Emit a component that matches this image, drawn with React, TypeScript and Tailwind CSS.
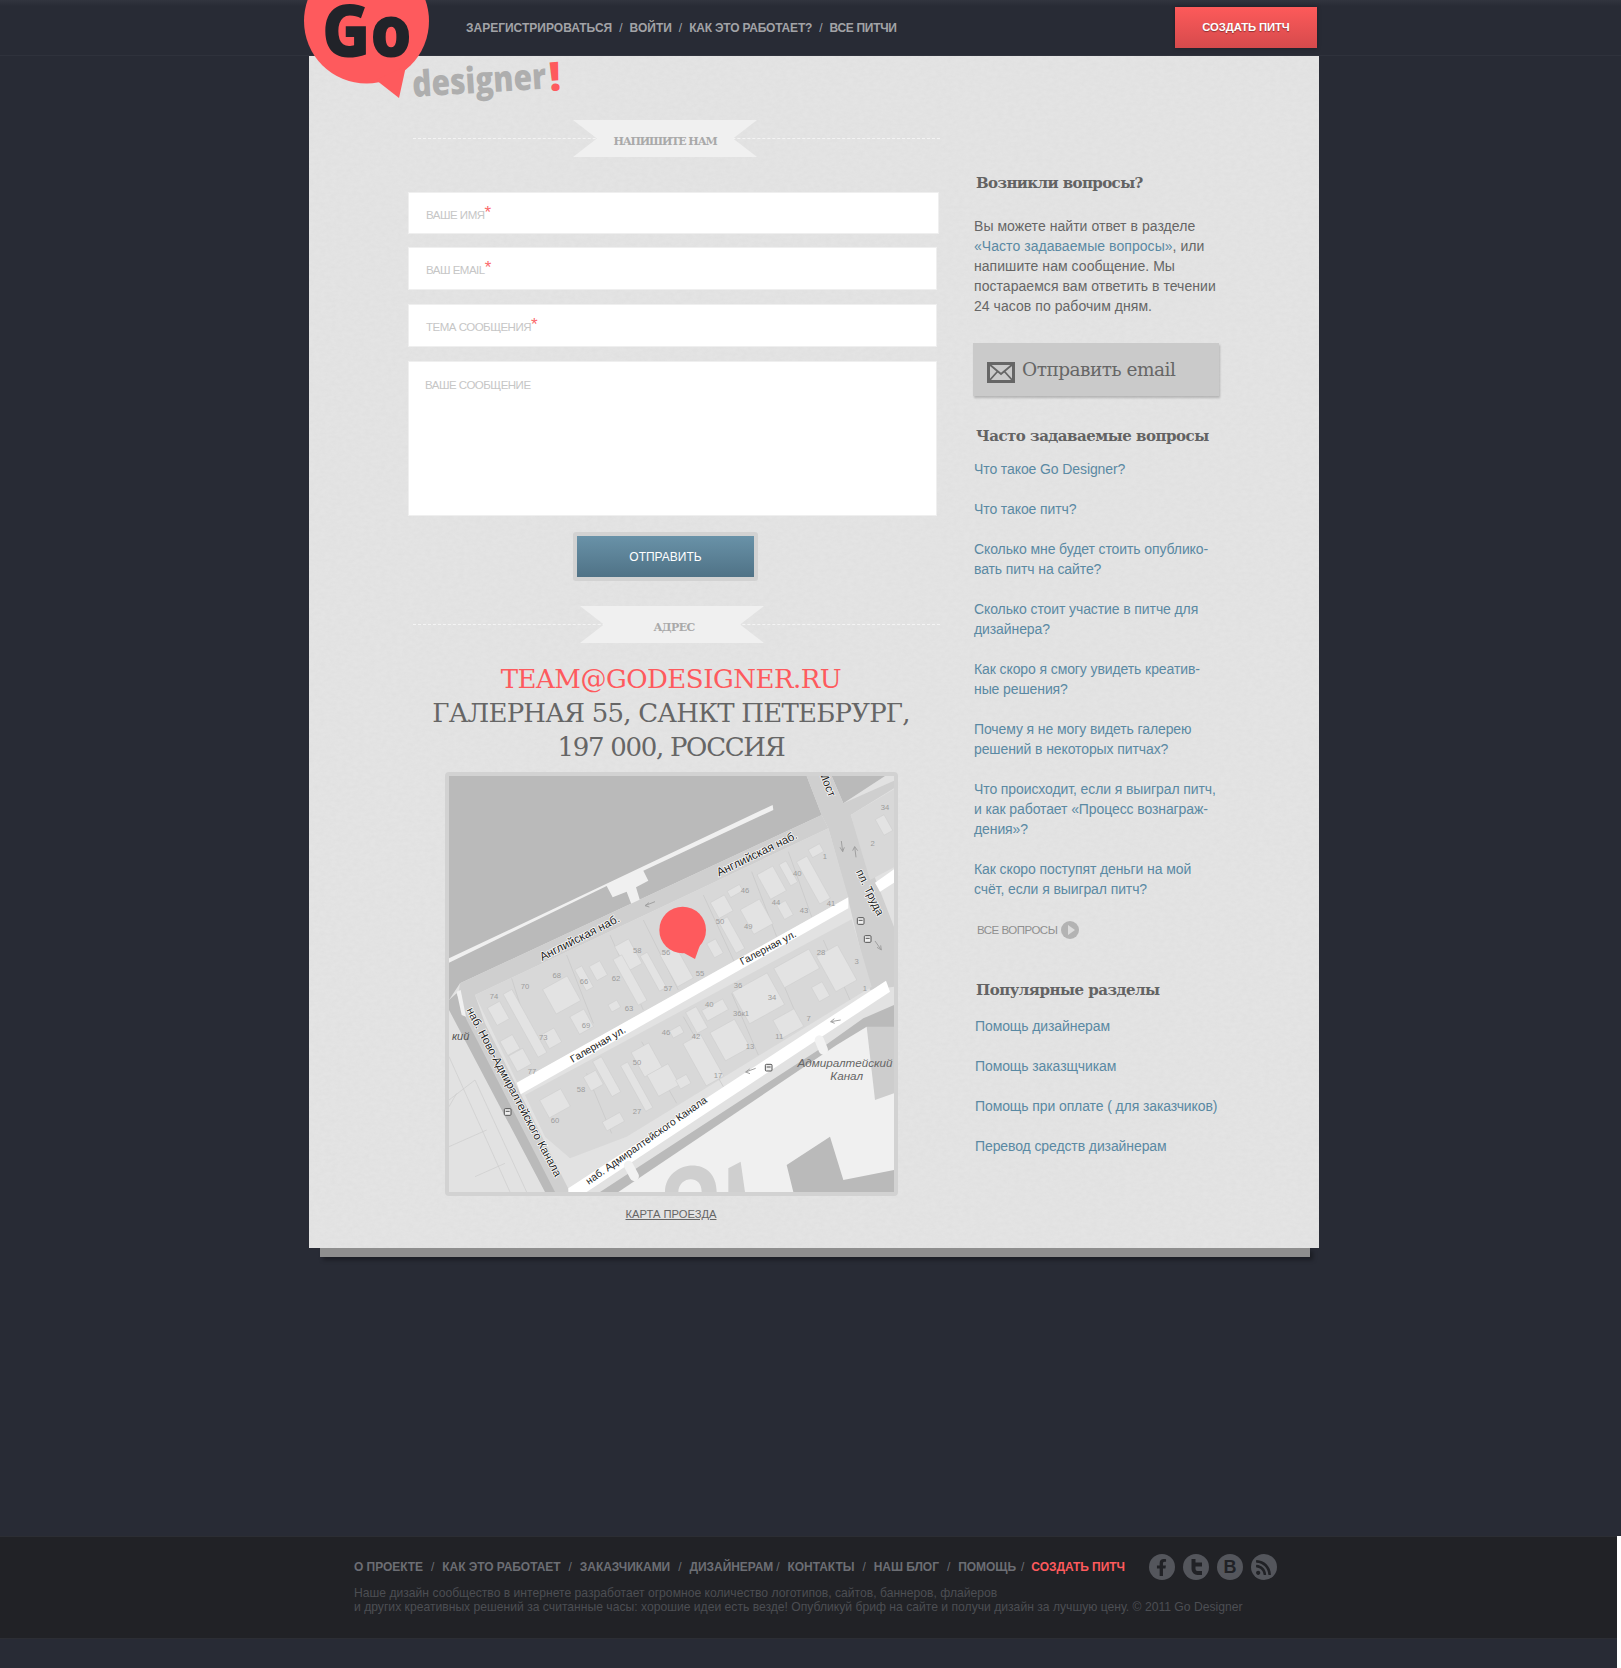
import { FaFacebookF, FaRss } from 'react-icons/fa';

const slab = "[font-family:'DejaVu_Serif',serif]";
const arial = "[font-family:'Liberation_Sans',Arial,sans-serif]";

const faqLinks = [
  ['Что такое Go Designer?'],
  ['Что такое питч?'],
  ['Сколько мне будет стоить опублико-', 'вать питч на сайте?'],
  ['Сколько стоит участие в питче для', 'дизайнера?'],
  ['Как скоро я смогу увидеть креатив-', 'ные решения?'],
  ['Почему я не могу видеть галерею', 'решений в некоторых питчах?'],
  ['Что происходит, если я выиграл питч,', 'и как работает «Процесс вознаграж-', 'дения»?'],
  ['Как скоро поступят деньги на мой', 'счёт, если я выиграл питч?'],
];

const popularLinks = [
  'Помощь дизайнерам',
  'Помощь заказщчикам',
  'Помощь при оплате ( для заказчиков)',
  'Перевод средств дизайнерам',
];

const footerLinks = ['О ПРОЕКТЕ', 'КАК ЭТО РАБОТАЕТ', 'ЗАКАЗЧИКАМИ', 'ДИЗАЙНЕРАМ', 'КОНТАКТЫ', 'НАШ БЛОГ', 'ПОМОЩЬ'];

// map data is in reference-crop units: 3 units = 1px
const buildings: number[][] = [
  [205, 760, 35, 50], [240, 855, 35, 40], [270, 900, 40, 45], [285, 790, 25, 180], [395, 705, 70, 70],
  [462, 655, 20, 60], [505, 632, 30, 40], [595, 585, 40, 70], [455, 785, 40, 50], [365, 835, 35, 40],
  [553, 738, 25, 20], [670, 635, 20, 100], [740, 620, 45, 90], [875, 440, 40, 45], [905, 525, 25, 90],
  [855, 565, 25, 40], [1025, 368, 45, 70], [980, 470, 55, 70], [1150, 360, 30, 120], [1158, 272, 32, 22],
  [915, 393, 35, 18], [1065, 450, 25, 40], [1075, 340, 20, 60], [600, 660, 25, 130],
  [375, 1030, 60, 50], [490, 962, 35, 40], [530, 950, 25, 100], [650, 900, 50, 70], [700, 960, 60, 60],
  [620, 980, 20, 130], [820, 900, 50, 120], [800, 780, 30, 60], [855, 750, 60, 30], [740, 815, 30, 20],
  [760, 965, 30, 25], [900, 840, 70, 80], [985, 715, 100, 90], [1075, 790, 60, 50], [1100, 625, 100, 55],
  [1220, 625, 60, 100], [1172, 695, 30, 40], [550, 1085, 50, 25], [1362, 195, 25, 45],
];

const houseNumbers: [string, number, number][] = [
  ['74', 192, 708], ['70', 285, 680], ['68', 380, 645], ['66', 462, 665], ['62', 558, 654], ['58', 622, 570],
  ['56', 708, 578], ['50', 870, 483], ['46', 945, 390], ['40', 1102, 340], ['44', 1038, 428], ['43', 1122, 450],
  ['41', 1203, 430], ['49', 955, 498], ['1', 1185, 288], ['2', 1328, 250], ['34', 1365, 142], ['55', 810, 640],
  ['57', 714, 684], ['63', 597, 744], ['69', 468, 795], ['73', 340, 833], ['77', 306, 935], ['36', 924, 675],
  ['34', 1026, 713], ['28', 1173, 576], ['3', 1280, 603], ['1', 1305, 686], ['40', 838, 732], ['36к1', 933, 759],
  ['7', 1136, 776], ['46', 708, 816], ['42', 798, 828], ['11', 1048, 828], ['13', 960, 858], ['50', 621, 908],
  ['17', 864, 945], ['58', 453, 987], ['27', 621, 1053], ['60', 375, 1080],
];

const streetLabels: [string, number, number, number, number][] = [
  ['Английская наб.', 450, 535, -27, 35],
  ['Английская наб.', 982, 283, -26, 35],
  ['Галерная ул.', 505, 855, -30, 31],
  ['Галерная ул.', 1015, 565, -28, 31],
  ['наб. Адмиралтейского Канала', 650, 1143, -35, 31],
  ['наб. Ново-Адмиралтейского Канала', 250, 997, 62, 34],
  ['пл. Труда', 1318, 398, 64, 34],
  ['Мост', 1190, 72, 68, 34],
];

const busStops = [[1292, 483], [1313, 537], [1016, 923], [233, 1056]];

function Ribbon({ label, className }: { label: string; className: string }) {
  return (
    <div className="relative h-[37px] w-[532px]">
      <div className="absolute left-[5px] right-0 top-[18px] border-t border-dashed border-[#f4f4f4]" />
      <div
        className={`absolute top-0 h-[37px] w-[184px] bg-[#f0f0f0] [clip-path:polygon(0_0,100%_0,87%_50%,100%_100%,0_100%,13%_50%)] ${slab} pt-[12px] text-center text-[11px] font-bold leading-[20px] text-[#a9a9a9] ${className}`}
      >
        {label}
      </div>
    </div>
  );
}

function Field({ label, className }: { label: string; className: string }) {
  return (
    <div className={`border border-[#efefef] bg-white ${className}`}>
      <span className={`${arial} pl-[17px] text-[11.5px] leading-[44px] tracking-[-0.5px] text-[#c6c6c6]`}>
        {label}
        <span className="relative top-[-1px] text-[17px] leading-none text-[#fb6a6c]">*</span>
      </span>
    </div>
  );
}

function MapView() {
  return (
    <svg viewBox="57 48 1335 1248" className="block h-[416px] w-[445px]">
      <rect x="57" y="48" width="1335" height="1248" fill="#e2e2e2" />
      {/* river and embankment */}
      <polygon points="57,48 1130,48 1175,165 90,670 57,720" fill="#bababa" />
      <polygon points="1205,48 1365,48 1240,130" fill="#bababa" />
      <polygon points="57,595 1028,135 1030,150 640,332 655,362 618,382 632,428 605,435 590,395 548,412 530,378 57,608" fill="#f0f0f0" />
      <polygon points="90,670 1175,165 1195,205 135,705 165,790 420,1296 350,1296 80,740" fill="#cfcfcf" />
      <polygon points="57,720 80,700 110,780 375,1296 345,1296 57,750" fill="#bababa" />
      <polygon points="80,695 92,690 108,770 95,765" fill="#f0f0f0" />
      {/* square and bridge */}
      <polygon points="1130,48 1205,48 1240,130 1392,62 1392,85 1262,165 1392,500 1392,680 1320,690 1255,420 1195,205 1175,165" fill="#cfcfcf" />
      <polygon points="1262,165 1392,88 1392,322 1320,360" fill="#d8d8d8" />
      {/* blocks */}
      <polygon points="135,705 1195,205 1255,412 262,968" fill="#d8d8d8" />
      <polygon points="285,1005 1265,478 1325,680 590,1130 420,1195 345,1130" fill="#d8d8d8" />
      <g stroke="#c6c6c6" strokeWidth="2" fill="none">
        <path d="M245,655 L310,860 M410,585 L490,790 M540,525 L640,750 M640,480 L745,690 M820,405 L915,610 M965,335 L1040,530 M1075,275 L1145,470" />
        <path d="M470,940 L545,1120 M635,845 L740,1030 M760,770 L880,980 M905,700 L985,885 M1040,625 L1110,790 M1180,540 L1260,720" />
      </g>
      {buildings.map(([cx, cy, w, h], i) => (
        <rect key={i} x={cx - w * 0.6} y={cy - h * 0.6} width={w * 1.2} height={h * 1.2} fill="#e3e3e3" stroke="#cdcdcd" strokeWidth="1.5" transform={`rotate(-29 ${cx} ${cy})`} />
      ))}
      {/* streets */}
      <polygon points="260,968 1255,412 1255,445 272,1003" fill="#ffffff" />
      <polygon points="1335,368 1392,328 1392,368 1350,395" fill="#ffffff" />
      <polygon points="415,1285 1368,662 1380,695 470,1296 415,1296" fill="#ffffff" />
      {/* canal and island */}
      <polygon points="510,1296 1180,860 1300,775 1392,735 1392,1296" fill="#bababa" />
      <polygon points="565,1296 1220,855 1310,800 1392,960 1392,1296" fill="#f0f0f0" />
      <polygon points="1310,800 1392,800 1392,1000 1335,1020" fill="#cdcdcd" />
      <polygon points="1070,1215 1200,1130 1240,1260 1392,1230 1392,1296 1090,1296" fill="#bababa" />
      <path d="M705,1296 C705,1200 860,1180 860,1296 L815,1296 C815,1240 745,1250 745,1296 Z" fill="#cfcfcf" />
      <polygon points="895,1225 932,1205 945,1296 895,1296" fill="#cfcfcf" />
      <rect x="1160" y="825" width="28" height="60" rx="14" fill="#f2f2f2" transform="rotate(-22 1174 855)" />
      <rect x="590" y="1200" width="28" height="65" rx="14" fill="#f2f2f2" transform="rotate(-28 604 1232)" />
      {/* west bank */}
      <g stroke="#cbcbcb" strokeWidth="2" fill="none">
        <path d="M57,890 L240,1296 M57,1020 L135,960 L290,1296 M57,1160 L170,1110 M135,1250 L225,1210 M57,1040 L80,1000" />
      </g>
      {houseNumbers.map(([n, x, y], i) => (
        <text key={i} x={x} y={y + 8} textAnchor="middle" fontFamily="Liberation Sans" fontSize="23" fill="#9c9c9c">{n}</text>
      ))}
      {streetLabels.map(([label, x, y, angle, size], i) => (
        <text key={i} x={x} y={y} textAnchor="middle" dominantBaseline="middle" fontFamily="Liberation Sans" fontSize={size} fill="#222222" stroke="#ffffff" strokeWidth="4" paintOrder="stroke" transform={`rotate(${angle} ${x} ${y})`}>{label}</text>
      ))}
      <text x="1245" y="920" textAnchor="middle" fontFamily="Liberation Sans" fontStyle="italic" fontSize="35" fill="#666666">Адмиралтейский</text>
      <text x="1250" y="960" textAnchor="middle" fontFamily="Liberation Sans" fontStyle="italic" fontSize="35" fill="#666666">Канал</text>
      <text x="118" y="840" textAnchor="end" fontFamily="Liberation Sans" fontStyle="italic" fontSize="33" fill="#555555">кий</text>
      {busStops.map(([x, y], i) => (
        <g key={i} fill="none" stroke="#555555" strokeWidth="3">
          <rect x={x - 10} y={y - 10} width="20" height="20" rx="3" fill="#eeeeee" />
          <path d={`M${x - 6},${y - 2} H${x + 6}`} />
        </g>
      ))}
      <g stroke="#a0a0a0" strokeWidth="3" fill="none">
        <path d="M675,425 L645,437 M645,437 L657,428 M645,437 L658,441" />
        <path d="M1232,780 L1202,785 M1202,785 L1213,776 M1202,785 L1214,790" />
        <path d="M977,925 L947,936 M947,936 L959,927 M947,936 L960,941" />
        <path d="M1234,243 L1238,275 M1238,275 L1230,262 M1238,275 L1243,262" />
        <path d="M1278,292 L1274,260 M1274,260 L1268,272 M1274,260 L1283,272" />
        <path d="M1335,543 L1354,570 M1354,570 L1341,562 M1354,570 L1352,556" />
      </g>
      {/* pin */}
      <circle cx="758" cy="510" r="70" fill="#fe5a5d" />
      <polygon points="755,575 795,597 810,555" fill="#fe5a5d" />
    </svg>
  );
}

export default function App() {
  return (
    <div className={`relative min-h-[1668px] w-full overflow-hidden bg-white ${arial}`}>
      {/* Logo */}
      <svg viewBox="300 0 280 110" className="absolute left-[300px] top-0 z-20 h-[110px] w-[280px]">
        <circle cx="366.5" cy="21" r="62.5" fill="#fe5a5d" />
        <polygon points="376,80 399,98 406,66" fill="#fe5a5d" />
        <text x="322" y="57" fontFamily="Open Sans" fontWeight="800" fontSize="72" fill="#212329" textLength="90" lengthAdjust="spacingAndGlyphs">Go</text>
        <g transform="rotate(-3.6 413 97)">
          <text x="413" y="97" fontFamily="Open Sans" fontWeight="800" fontSize="36" fill="#aeaeae" textLength="134" lengthAdjust="spacingAndGlyphs">designer</text>
        </g>
        <text x="550" y="91" fontFamily="Open Sans" fontWeight="800" fontSize="40" fill="#fe5a5d" transform="rotate(-4 550 91)">!</text>
      </svg>

      <div className="h-[1536px] w-full bg-[#282b35]">
        {/* Header */}
        <header className="flex h-[56px] w-full items-start border-b border-[#2f323c] bg-[linear-gradient(#31343e,#282b35_6px)]">
          <nav className="ml-[466px] mt-[20px] flex items-center text-[12px] font-bold leading-[16px] text-[#a2a3a7]">
            <a>ЗАРЕГИСТРИРОВАТЬСЯ</a>
            <span className="mx-[7px] font-normal">/</span>
            <a>ВОЙТИ</a>
            <span className="mx-[7px] font-normal">/</span>
            <a className="tracking-[-0.2px]">КАК ЭТО РАБОТАЕТ?</a>
            <span className="mx-[7px] font-normal">/</span>
            <a className="tracking-[-0.3px]">ВСЕ ПИТЧИ</a>
          </nav>
          <button className="ml-auto mr-[304px] mt-[7px] h-[41px] w-[142px] bg-[linear-gradient(#fd5a5a,#d64a4c)] text-[11.3px] font-bold tracking-[-0.1px] text-white shadow-[0_0_4px_rgba(0,0,0,0.3)] [text-shadow:0_1px_1px_rgba(0,0,0,0.4)]">
            СОЗДАТЬ ПИТЧ
          </button>
        </header>

        {/* Panel */}
        <main className="relative ml-[309px] h-[1192px] w-[1010px] bg-[#e4e4e4]">
          <svg className="absolute inset-0 h-full w-full opacity-[0.06]">
            <filter id="paper">
              <feTurbulence type="fractalNoise" baseFrequency="0.18 0.3" numOctaves="3" />
              <feColorMatrix values="0 0 0 0 0.4 0 0 0 0 0.4 0 0 0 0 0.4 0 0 0 1.6 -0.4" />
            </filter>
            <rect width="100%" height="100%" filter="url(#paper)" />
          </svg>
          <div className="relative flex pl-[99px] pt-[64px]">
            {/* Contact form */}
            <section className="w-[532px]">
              <Ribbon label="НАПИШИТЕ НАМ" className="left-[165px] tracking-[-1.1px]" />
              <Field label="ВАШЕ ИМЯ" className="mt-[35px] h-[42px] w-[531px]" />
              <Field label="ВАШ EMAIL" className="mt-[13px] h-[43px] w-[529px]" />
              <Field label="ТЕМА СООБЩЕНИЯ" className="mt-[14px] h-[43px] w-[529px]" />
              <div className="mt-[14px] h-[155px] w-[529px] border border-[#efefef] bg-white pl-[16px] pt-[13px] text-[11.5px] leading-[20px] tracking-[-0.5px] text-[#c6c6c6]">
                ВАШЕ СООБЩЕНИЕ
              </div>
              <button className="ml-[165px] mt-[16px] block h-[49px] w-[185px] rounded-[3px] border-4 border-[#d2d2d2] bg-[linear-gradient(#6992a8,#4f7286)] text-[12px] text-white">
                ОТПРАВИТЬ
              </button>
              <div className="mt-[25px]">
                <Ribbon label="АДРЕС" className="left-[172px] pl-[4px] tracking-[-0.6px]" />
              </div>
              <div className={`mt-[19px] w-[526px] text-center text-[26px] leading-[34px] tracking-[-0.8px] text-[#666666] ${slab}`}>
                <a className="tracking-[-0.5px] text-[#fe5a5d]">TEAM@GODESIGNER.RU</a>
                <br />
                ГАЛЕРНАЯ 55, САНКТ ПЕТЕБРУРГ,
                <br />
                <span className="tracking-[-1.3px]">197 000, РОССИЯ</span>
              </div>
              <div className="ml-[37px] mt-[8px] h-[424px] w-[453px] rounded-[4px] border-4 border-[#d2d2d2]">
                <MapView />
              </div>
              <div className="mt-[8px] w-[526px] text-center text-[11.2px] leading-[20px] text-[#666666] underline">
                КАРТА ПРОЕЗДА
              </div>
            </section>

            {/* Sidebar */}
            <aside className="ml-[34px] mt-[51px] w-[250px] text-[14px] leading-[20px] text-[#666666]">
              <h3 className={`ml-[2px] text-[15px] font-bold leading-[24px] tracking-[-0.6px] text-[#636363] ${slab}`}>Возникли вопросы?</h3>
              <p className="mt-[21px] tracking-[0.05px]">
                Вы можете найти ответ в разделе
                <br />
                <a className="text-[#5a89a3]">«Часто задаваемые вопросы»</a>, или
                <br />
                напишите нам сообщение. Мы
                <br />
                постараемся вам ответить в течении
                <br />
                24 часов по рабочим дням.
              </p>
              <button className={`-ml-[1px] mt-[27px] flex h-[53px] w-[246px] items-center bg-[#cacaca] pl-[14px] text-[18.5px] text-[#666666] shadow-[1px_2px_2px_rgba(0,0,0,0.2)] ${slab}`}>
                <svg viewBox="0 0 28 21" className="mt-[5px] h-[21px] w-[28px]">
                  <rect x="1.5" y="1.5" width="25" height="18" fill="none" stroke="#666666" strokeWidth="3" />
                  <path d="M2,2 L14,12 L26,2 M2,19 L10.5,9.5 M26,19 L17.5,9.5" fill="none" stroke="#666666" strokeWidth="1.8" />
                </svg>
                <span className="ml-[7px] mt-[1px] tracking-[-0.5px]">Отправить email</span>
              </button>
              <h3 className={`ml-[2px] mt-[28px] text-[15px] font-bold leading-[24px] tracking-[-0.5px] text-[#636363] ${slab}`}>Часто задаваемые вопросы</h3>
              <ul className="mt-[11px] space-y-[20px] tracking-[-0.1px] text-[#5a89a3]">
                {faqLinks.map((lines) => (
                  <li key={lines[0]}>
                    {lines.map((line) => (
                      <div key={line}>{line}</div>
                    ))}
                  </li>
                ))}
              </ul>
              <div className="ml-[3px] mt-[21px] flex h-[20px] items-center text-[11.5px] tracking-[-0.5px] text-[#8f8f8f]">
                ВСЕ ВОПРОСЫ
                <span className="ml-[4px] flex h-[18px] w-[18px] items-center justify-center rounded-full bg-[#b3b3b3]">
                  <span className="ml-[2px] border-y-[5px] border-l-[7px] border-y-transparent border-l-[#dcdcdc]" />
                </span>
              </div>
              <h3 className={`ml-[2px] mt-[38px] text-[15px] font-bold leading-[24px] tracking-[-0.5px] text-[#636363] ${slab}`}>Популярные разделы</h3>
              <ul className="ml-[1px] mt-[14px] space-y-[20px] tracking-[-0.1px] text-[#5a89a3]">
                {popularLinks.map((link) => (
                  <li key={link}>{link}</li>
                ))}
              </ul>
            </aside>
          </div>
        </main>
        <div className="ml-[320px] h-[9px] w-[990px] bg-[#8e8e8e] shadow-[3px_3px_4px_rgba(0,0,0,0.35)]" />
      </div>

      {/* Footer */}
      <footer className="h-[132px] w-[1617px] bg-[#282b35]">
        <div className="h-[103px] border-y border-[#2c2e34] bg-[#212226] pl-[354px]">
          <div className="flex h-[49px] items-start pt-[17px]">
            <nav className="flex h-[26px] items-center text-[12px] font-bold tracking-[-0.05px] text-[#6c6e74]">
              {footerLinks.map((link) => (
                <span key={link} className="flex items-center">
                  <a>{link}</a>
                  <span className={link === 'ДИЗАЙНЕРАМ' ? 'ml-[3px] mr-[8px] font-normal' : link === 'ПОМОЩЬ' ? 'ml-[5px] mr-[8px] font-normal' : 'mx-[8px] font-normal'}>/</span>
                </span>
              ))}
              <a className="-ml-[1px] text-[#fe5a5d]">СОЗДАТЬ ПИТЧ</a>
            </nav>
            <div className="ml-[24px] flex gap-[8px] text-[#212226]">
              <span className="flex h-[26px] w-[26px] items-center justify-center rounded-full bg-[#54565c]">
                <FaFacebookF size={17} />
              </span>
              <span className="flex h-[26px] w-[26px] items-center justify-center rounded-full bg-[#54565c]">
                <svg viewBox="0 0 26 26" className="h-[26px] w-[26px]">
                  <path d="M10.5,5 V15 A4,4 0 0 0 14.5,19 H19 M10.5,10.5 H19" fill="none" stroke="#212226" strokeWidth="4" />
                </svg>
              </span>
              <span className="flex h-[26px] w-[26px] items-center justify-center rounded-full bg-[#54565c] text-[18px] font-bold">
                B
              </span>
              <span className="flex h-[26px] w-[26px] items-center justify-center rounded-full bg-[#54565c]">
                <FaRss size={17} />
              </span>
            </div>
          </div>
          <p className="text-[12.15px] leading-[14px] text-[#4c4e53]">
            Наше дизайн сообщество в интернете разработает огромное количество логотипов, сайтов, баннеров, флайеров
            <br />
            и других креативных решений за считанные часы: хорошие идеи есть везде! Опубликуй бриф на сайте и получи дизайн за лучшую цену. © 2011 Go Designer
          </p>
        </div>
      </footer>
    </div>
  );
}
